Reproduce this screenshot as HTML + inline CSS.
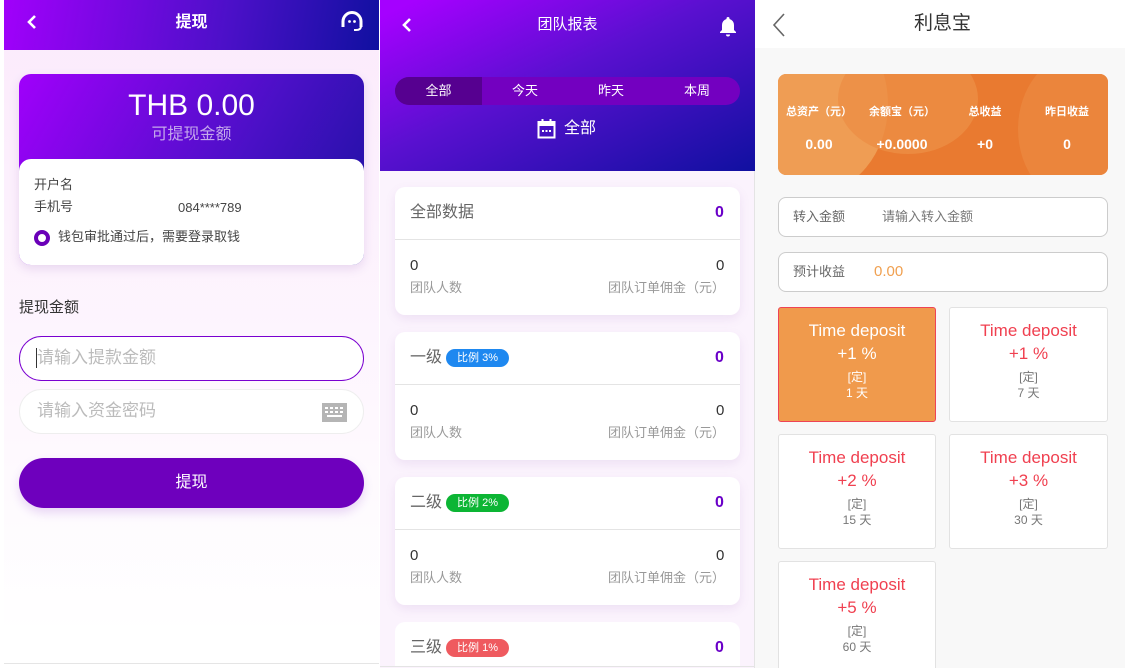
<!DOCTYPE html>
<html style="overflow:hidden;width:1125px;height:668px"><head><meta charset="utf-8"><style>
*{margin:0;padding:0;box-sizing:border-box}
body{width:1125px;height:668px;overflow:hidden;background:#fff;font-family:"Liberation Sans","Noto Sans CJK SC",sans-serif;position:relative;line-height:1.32}
.a{position:absolute}
.c{text-align:center}
</style></head><body>
<!-- Panel 1 -->
<div class="a" style="left:4px;top:0;width:375px;height:668px;background:linear-gradient(#fbeafc,#fff 95%)"></div>
<div class="a" style="left:4px;top:0;width:375px;height:50px;background:linear-gradient(100deg,#a100fb,#4b10c8 60%,#1010a0)"></div>
<svg class="a" style="left:25px;top:14px" width="14" height="16" viewBox="0 0 14 16"><path d="M10 2L4 8l6 6" stroke="#fff" stroke-width="2.6" fill="none"/></svg>
<div class="a c" style="left:4px;top:12px;width:375px;color:#fff;font-size:16px;font-weight:bold">提现</div>
<svg class="a" style="left:340px;top:11px" width="24" height="21" viewBox="0 0 24 21"><path d="M3 16V10.5a9 9 0 0 1 18 0V16" stroke="#fff" stroke-width="3" fill="none"/><circle cx="9.5" cy="10.5" r="1.4" fill="#fff"/><circle cx="14.5" cy="10.5" r="1.4" fill="#fff"/><path d="M21 15q0 4-5 4h-2" stroke="#fff" stroke-width="2" fill="none"/></svg>
<div class="a" style="left:19px;top:74px;width:345px;height:191px;border-radius:12px;background:linear-gradient(120deg,#a000fb,#4a10c6 60%,#1a12a0);box-shadow:0 4px 10px rgba(120,60,160,.15)"></div>
<div class="a c" style="left:19px;top:86px;width:345px;color:#fff;font-size:30px">THB 0.00</div>
<div class="a c" style="left:19px;top:124px;width:345px;color:#c5a8ec;font-size:16px">可提现金额</div>
<div class="a" style="left:19px;top:159px;width:345px;height:106px;border-radius:12px;background:#fff"></div>
<div class="a" style="left:34px;top:176px;font-size:13px;color:#444">开户名</div>
<div class="a" style="left:34px;top:198px;font-size:13px;color:#444">手机号</div>
<div class="a" style="left:178px;top:199px;font-size:13px;color:#444">084****789</div>
<div class="a" style="left:34px;top:230px;width:16px;height:16px;border-radius:50%;border:4.5px solid #6a00b8;background:#fff"></div>
<div class="a" style="left:58px;top:228px;font-size:13px;color:#444">钱包审批通过后，需要登录取钱</div>
<div class="a" style="left:19px;top:298px;font-size:15px;color:#333">提现金额</div>
<div class="a" style="left:19px;top:336px;width:345px;height:45px;border-radius:23px;border:1px solid #7a00d0;background:#fff"></div>
<div class="a" style="left:36px;top:348px;width:1px;height:20px;background:#333"></div>
<div class="a" style="left:37px;top:347px;font-size:17px;color:#bbb">请输入提款金额</div>
<div class="a" style="left:19px;top:389px;width:345px;height:45px;border-radius:23px;border:1px solid #eee;background:#fff"></div>
<div class="a" style="left:37px;top:400px;font-size:17px;color:#bbb">请输入资金密码</div>
<svg class="a" style="left:322px;top:403px" width="25" height="19" viewBox="0 0 25 19"><rect width="25" height="19" fill="#b5b5b5"/><g fill="#fff"><rect x="3" y="4" width="3" height="2"/><rect x="8" y="4" width="3" height="2"/><rect x="13" y="4" width="3" height="2"/><rect x="18" y="4" width="3" height="2"/><rect x="3" y="8" width="3" height="2"/><rect x="8" y="8" width="3" height="2"/><rect x="13" y="8" width="3" height="2"/><rect x="18" y="8" width="3" height="2"/><rect x="5" y="12" width="15" height="2"/></g></svg>
<div class="a c" style="left:19px;top:458px;width:345px;height:50px;border-radius:25px;background:#6e00bd;color:#fff;font-size:16px;line-height:50px;box-shadow:0 5px 10px rgba(110,0,190,.15)">提现</div>
<div class="a" style="left:4px;top:663px;width:375px;height:1px;background:#e5e5e5"></div>

<!-- Panel 2 -->
<div class="a" style="left:380px;top:0;width:375px;height:668px;background:#fbf3fd"></div>
<div class="a" style="left:754px;top:0;width:1px;height:668px;background:#e4e4e4"></div>
<div class="a" style="left:380px;top:0;width:375px;height:171px;background:linear-gradient(155deg,#a500ff 5%,#5a10d0 45%,#1010a0 100%)"></div>
<svg class="a" style="left:400px;top:17px" width="14" height="16" viewBox="0 0 14 16"><path d="M10 2L4 8l6 6" stroke="#fff" stroke-width="2.6" fill="none"/></svg>
<div class="a c" style="left:380px;top:15px;width:375px;color:#fff;font-size:15px">团队报表</div>
<svg class="a" style="left:718px;top:15px" width="20" height="22" viewBox="0 0 20 22"><path d="M10 2a1.5 1.5 0 0 1 1.5 1.5V4a6 6 0 0 1 4.5 6v5l2 2v1H2v-1l2-2v-5a6 6 0 0 1 4.5-6v-.5A1.5 1.5 0 0 1 10 2z" fill="#fff"/><path d="M8 19.5a2 2 0 0 0 4 0z" fill="#fff"/></svg>
<div class="a" style="left:395px;top:77px;width:345px;height:28px;border-radius:14px;background:#7300c0;overflow:hidden"><div style="width:87px;height:28px;background:#560090"></div></div>
<div class="a" style="left:395px;top:82px;width:345px;display:flex;color:#fff;font-size:13px"><span style="width:87px;text-align:center">全部</span><span style="width:86px;text-align:center">今天</span><span style="width:86px;text-align:center">昨天</span><span style="width:86px;text-align:center">本周</span></div>
<svg class="a" style="left:537px;top:118px" width="19" height="21" viewBox="0 0 19 21"><rect x="1.5" y="4" width="16" height="15.5" fill="none" stroke="#fff" stroke-width="2"/><rect x="1.5" y="4" width="16" height="4" fill="#fff"/><rect x="4.5" y="1" width="2" height="4" fill="#fff"/><rect x="12.5" y="1" width="2" height="4" fill="#fff"/><rect x="5" y="12" width="2" height="2" fill="#fff"/><rect x="8.5" y="12" width="2" height="2" fill="#fff"/><rect x="12" y="12" width="2" height="2" fill="#fff"/></svg>
<div class="a" style="left:564px;top:118px;color:#fff;font-size:16px">全部</div>

<div class="a" style="left:395px;top:187px;width:345px;height:128px;background:#fff;border-radius:10px;box-shadow:0 4px 10px rgba(150,100,180,.12)"></div>
<div class="a" style="left:395px;top:239px;width:345px;height:1px;background:#e4e4e4"></div>
<div class="a" style="left:410px;top:202px;font-size:16px;color:#666">全部数据</div>
<div class="a" style="left:715px;top:202px;font-size:16px;color:#6a00c8;font-weight:bold">0</div>
<div class="a" style="left:410px;top:256px;font-size:15px;color:#333">0</div>
<div class="a" style="left:716px;top:256px;font-size:15px;color:#333">0</div>
<div class="a" style="left:410px;top:279px;font-size:13px;color:#999">团队人数</div>
<div class="a" style="left:608px;top:279px;font-size:13px;color:#999">团队订单佣金（元）</div>

<div class="a" style="left:395px;top:332px;width:345px;height:128px;background:#fff;border-radius:10px;box-shadow:0 4px 10px rgba(150,100,180,.12)"></div>
<div class="a" style="left:395px;top:384px;width:345px;height:1px;background:#e4e4e4"></div>
<div class="a" style="left:410px;top:347px;font-size:16px;color:#666">一级</div>
<div class="a c" style="left:446px;top:349px;width:63px;height:18px;border-radius:9px;background:#1e88f0;color:#fff;font-size:11px;line-height:18px">比例 3%</div>
<div class="a" style="left:715px;top:347px;font-size:16px;color:#6a00c8;font-weight:bold">0</div>
<div class="a" style="left:410px;top:401px;font-size:15px;color:#333">0</div>
<div class="a" style="left:716px;top:401px;font-size:15px;color:#333">0</div>
<div class="a" style="left:410px;top:424px;font-size:13px;color:#999">团队人数</div>
<div class="a" style="left:608px;top:424px;font-size:13px;color:#999">团队订单佣金（元）</div>

<div class="a" style="left:395px;top:477px;width:345px;height:128px;background:#fff;border-radius:10px;box-shadow:0 4px 10px rgba(150,100,180,.12)"></div>
<div class="a" style="left:395px;top:529px;width:345px;height:1px;background:#e4e4e4"></div>
<div class="a" style="left:410px;top:492px;font-size:16px;color:#666">二级</div>
<div class="a c" style="left:446px;top:494px;width:63px;height:18px;border-radius:9px;background:#0cb534;color:#fff;font-size:11px;line-height:18px">比例 2%</div>
<div class="a" style="left:715px;top:492px;font-size:16px;color:#6a00c8;font-weight:bold">0</div>
<div class="a" style="left:410px;top:546px;font-size:15px;color:#333">0</div>
<div class="a" style="left:716px;top:546px;font-size:15px;color:#333">0</div>
<div class="a" style="left:410px;top:569px;font-size:13px;color:#999">团队人数</div>
<div class="a" style="left:608px;top:569px;font-size:13px;color:#999">团队订单佣金（元）</div>

<div class="a" style="left:395px;top:622px;width:345px;height:44px;background:#fff;border-radius:10px 10px 0 0"></div>
<div class="a" style="left:410px;top:637px;font-size:16px;color:#666">三级</div>
<div class="a c" style="left:446px;top:639px;width:63px;height:18px;border-radius:9px;background:#ef5a5f;color:#fff;font-size:11px;line-height:18px">比例 1%</div>
<div class="a" style="left:715px;top:637px;font-size:16px;color:#6a00c8;font-weight:bold">0</div>
<div class="a" style="left:380px;top:666px;width:375px;height:1px;background:#e4e4e4"></div>

<!-- Panel 3 -->
<div class="a" style="left:755px;top:0;width:370px;height:668px;background:#f8f8f8"></div>
<div class="a" style="left:755px;top:0;width:370px;height:48px;background:#fff"></div>
<svg class="a" style="left:771px;top:13px" width="16" height="24" viewBox="0 0 16 24"><path d="M13 1L3 12l10 11" stroke="#666" stroke-width="1.6" fill="none"/></svg>
<div class="a c" style="left:755px;top:11px;width:375px;font-size:19px;color:#333">利息宝</div>
<div class="a" style="left:778px;top:74px;width:330px;height:101px;border-radius:8px;overflow:hidden;background:#e97a30">
<div class="a" style="left:-40px;top:-60px;width:150px;height:180px;border-radius:50%;background:#f0a35a;opacity:.85"></div>
<div class="a" style="left:60px;top:-30px;width:140px;height:110px;border-radius:50%;background:#ec8e45;opacity:.8"></div>
<div class="a" style="left:240px;top:-20px;width:120px;height:150px;border-radius:50%;background:#ec8c44;opacity:.6"></div>
</div>
<div class="a" style="left:778px;top:105px;width:330px;display:flex;color:#fff;font-size:11px;font-weight:bold"><span style="width:82px;text-align:center">总资产（元）</span><span style="width:84px;text-align:center">余额宝（元）</span><span style="width:82px;text-align:center">总收益</span><span style="width:82px;text-align:center">昨日收益</span></div>
<div class="a" style="left:778px;top:135px;width:330px;display:flex;color:#fff;font-size:14px;font-weight:bold"><span style="width:82px;text-align:center">0.00</span><span style="width:84px;text-align:center">+0.0000</span><span style="width:82px;text-align:center">+0</span><span style="width:82px;text-align:center">0</span></div>
<div class="a" style="left:778px;top:197px;width:330px;height:40px;border:1px solid #ccc;border-radius:8px;background:#fff"></div>
<div class="a" style="left:793px;top:208px;font-size:13px;color:#666">转入金额</div>
<div class="a" style="left:882px;top:208px;font-size:13px;color:#777">请输入转入金额</div>
<div class="a" style="left:778px;top:252px;width:330px;height:40px;border:1px solid #ccc;border-radius:8px;background:#fff"></div>
<div class="a" style="left:793px;top:263px;font-size:13px;color:#666">预计收益</div>
<div class="a" style="left:874px;top:262px;font-size:15px;color:#f0a050">0.00</div>

<div class="a c" style="left:778px;top:307px;width:158px;height:115px;border:1px solid #ee4455;border-radius:3px;background:#f09a4c;color:#fff"><div style="margin-top:12px;font-size:17px">Time deposit</div><div style="margin-top:1px;font-size:17px">+1 %</div><div style="margin-top:4px;font-size:12px">[定]</div><div style="font-size:12px;margin-top:0">1 天</div></div>
<div class="a c" style="left:949px;top:307px;width:159px;height:115px;border:1px solid #e2e2e2;border-radius:3px;background:#fff;color:#f04050"><div style="margin-top:12px;font-size:17px">Time deposit</div><div style="margin-top:1px;font-size:17px">+1 %</div><div style="margin-top:4px;font-size:12px;color:#777">[定]</div><div style="font-size:12px;color:#777">7 天</div></div>
<div class="a c" style="left:778px;top:434px;width:158px;height:115px;border:1px solid #e2e2e2;border-radius:3px;background:#fff;color:#f04050"><div style="margin-top:12px;font-size:17px">Time deposit</div><div style="margin-top:1px;font-size:17px">+2 %</div><div style="margin-top:4px;font-size:12px;color:#777">[定]</div><div style="font-size:12px;color:#777">15 天</div></div>
<div class="a c" style="left:949px;top:434px;width:159px;height:115px;border:1px solid #e2e2e2;border-radius:3px;background:#fff;color:#f04050"><div style="margin-top:12px;font-size:17px">Time deposit</div><div style="margin-top:1px;font-size:17px">+3 %</div><div style="margin-top:4px;font-size:12px;color:#777">[定]</div><div style="font-size:12px;color:#777">30 天</div></div>
<div class="a c" style="left:778px;top:561px;width:158px;height:107px;border:1px solid #e2e2e2;border-bottom:none;border-radius:3px 3px 0 0;background:#fff;color:#f04050;overflow:hidden"><div style="margin-top:12px;font-size:17px">Time deposit</div><div style="margin-top:1px;font-size:17px">+5 %</div><div style="margin-top:4px;font-size:12px;color:#777">[定]</div><div style="font-size:12px;color:#777">60 天</div></div>
</body></html>
